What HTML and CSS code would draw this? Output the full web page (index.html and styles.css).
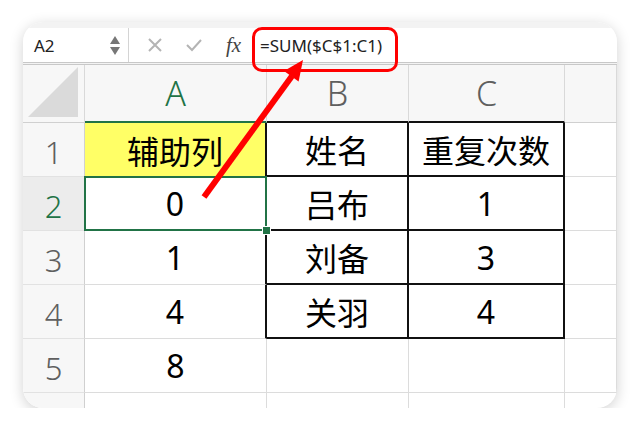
FILE: index.html
```html
<!DOCTYPE html>
<html lang="zh-CN">
<head>
    <meta charset="UTF-8">
    <meta name="viewport" content="width=device-width, initial-scale=1.0">
    <title>辅助列 重复次数</title>
    <link rel="stylesheet" href="styles.css">
</head>
<body>
    <div class="card">
        <!-- Barre de formule -->
        <div class="toolbar">
            <div class="namebox">
                <span class="ref">A2</span>
                <span class="spin"><i class="up"></i><i class="down"></i></span>
            </div>
            <div class="tools">
                <svg class="tool" width="16" height="16" viewBox="0 0 16 16"><path d="M2 2L14 14M14 2L2 14" stroke="#b4b4b4" stroke-width="2" fill="none"/></svg>
                <svg class="tool" width="18" height="16" viewBox="0 0 18 16"><path d="M2 8L7 13L16 3" stroke="#b4b4b4" stroke-width="2" fill="none"/></svg>
                <span class="fx">fx</span>
            </div>
            <div class="formula">=SUM($C$1:C1)</div>
        </div>

        <!-- Feuille -->
        <div class="sheet">
            <div class="hd corner"><span class="tri"></span></div>
            <div class="hd col sel">A</div>
            <div class="hd col">B</div>
            <div class="hd col">C</div>
            <div class="hd col"></div>

            <div class="rh">1</div>
            <div class="c yellow tr">辅助列</div>
            <div class="c tb">姓名</div>
            <div class="c tb">重复次数</div>
            <div class="c"></div>

            <div class="rh active">2</div>
            <div class="c tr current">0<span class="handle"></span></div>
            <div class="c tb">吕布</div>
            <div class="c tb">1</div>
            <div class="c"></div>

            <div class="rh">3</div>
            <div class="c tr">1</div>
            <div class="c tb">刘备</div>
            <div class="c tb">3</div>
            <div class="c"></div>

            <div class="rh">4</div>
            <div class="c tr">4</div>
            <div class="c tb">关羽</div>
            <div class="c tb">4</div>
            <div class="c"></div>

            <div class="rh">5</div>
            <div class="c">8</div>
            <div class="c"></div>
            <div class="c"></div>
            <div class="c"></div>

            <div class="rh"></div>
            <div class="c"></div>
            <div class="c"></div>
            <div class="c"></div>
            <div class="c"></div>
        </div>
    </div>

    <!-- Annotation rouge -->
    <div class="mark"></div>
    <svg class="arrow" width="640" height="431" viewBox="0 0 640 431">
        <line x1="204" y1="197" x2="292" y2="76" stroke="#ff0000" stroke-width="6"/>
        <polygon points="303,60 298.6,81.5 284,70.9" fill="#ff0000"/>
    </svg>
</body>
</html>
```

FILE: styles.css
```css
body {
    margin: 0;
    background: #ffffff;
    font-family: "Noto Sans", "Noto Sans CJK SC", sans-serif;
}
.card {
    margin: 22px 0 0 23px;
    width: 594px;
    height: 386px;
    border-radius: 20px;
    overflow: hidden;
    background: #ffffff;
    box-shadow: 0 3px 14px rgba(0, 0, 0, 0.18);
}
.toolbar {
    display: flex;
    height: 34px;
    padding-top: 6px;
    background: #f3f3f3;
    border-bottom: 3px double #c8c8c8;
}
.namebox {
    width: 106px;
    display: flex;
    align-items: center;
    justify-content: space-between;
    padding: 0 8px 0 11px;
    box-sizing: border-box;
    background: #ffffff;
    border-right: 1px solid #d4d4d4;
    font-size: 17px;
    color: #222;
}
.spin {
    display: flex;
    flex-direction: column;
    gap: 3px;
}
.spin i {
    width: 0;
    height: 0;
    border-left: 5px solid transparent;
    border-right: 5px solid transparent;
}
.spin .up {
    border-bottom: 8px solid #777;
}
.spin .down {
    border-top: 8px solid #777;
}
.tools {
    display: flex;
    align-items: center;
    gap: 22px;
    padding-left: 18px;
    width: 123px;
    box-sizing: border-box;
    background: #ffffff;
}
.fx {
    font-family: "Liberation Serif", "DejaVu Serif", serif;
    font-style: italic;
    font-size: 21px;
    color: #444;
    margin-left: 1px;
}
.formula {
    flex: 1;
    display: flex;
    align-items: center;
    padding-left: 8px;
    background: #ffffff;
    font-size: 17px;
    color: #222;
}
.sheet {
    display: grid;
    grid-template-columns: 62px 182px 142px 156px 1fr;
    grid-template-rows: 58px repeat(6, 54px);
}
.hd {
    background: #f7f7f7;
    border-right: 1px solid #d9d9d9;
    border-bottom: 1px solid #d0d0d0;
    box-sizing: border-box;
}
.corner {
    position: relative;
}
.tri {
    position: absolute;
    right: 6px;
    bottom: 5px;
    width: 0;
    height: 0;
    border-left: 50px solid transparent;
    border-bottom: 50px solid #dadada;
}
.col {
    display: flex;
    align-items: center;
    justify-content: center;
    font-size: 34px;
    font-weight: 300;
    color: #5f5f5f;
}
.col.sel {
    color: #217346;
    border-bottom: 2px solid #217346;
}
.rh {
    display: flex;
    align-items: center;
    justify-content: center;
    padding-top: 5px;
    box-sizing: border-box;
    background: #f7f7f7;
    border-right: 1px solid #d0d0d0;
    border-bottom: 1px solid #e2e2e2;
    font-size: 31px;
    font-weight: 300;
    color: #5f5f5f;
}
.rh.active {
    background: #ececec;
    color: #217346;
}
.c {
    display: flex;
    align-items: center;
    justify-content: center;
    box-sizing: border-box;
    border-right: 1px solid #dcdcdc;
    border-bottom: 1px solid #dcdcdc;
    font-size: 32px;
    color: #000;
}
.yellow {
    background: #ffff66;
}
.tr {
    border-right: 2px solid #111;
}
.tb {
    border-right: 2px solid #111;
    border-bottom: 2px solid #111;
}
.sheet .hd:nth-child(3),
.sheet .hd:nth-child(4) {
    border-bottom: 2px solid #111;
}
.current {
    position: relative;
}
.current::after {
    content: "";
    position: absolute;
    left: -1px;
    top: -1px;
    right: -2px;
    bottom: -1px;
    border: 2px solid #217346;
}
.handle {
    position: absolute;
    right: -6px;
    bottom: -5px;
    width: 7px;
    height: 7px;
    background: #217346;
    border: 1px solid #ffffff;
    z-index: 1;
}
.mark {
    position: absolute;
    left: 252px;
    top: 27px;
    width: 140px;
    height: 39px;
    border: 3px solid #ff0000;
    border-radius: 10px;
}
.arrow {
    position: absolute;
    left: 0;
    top: 0;
}
```
